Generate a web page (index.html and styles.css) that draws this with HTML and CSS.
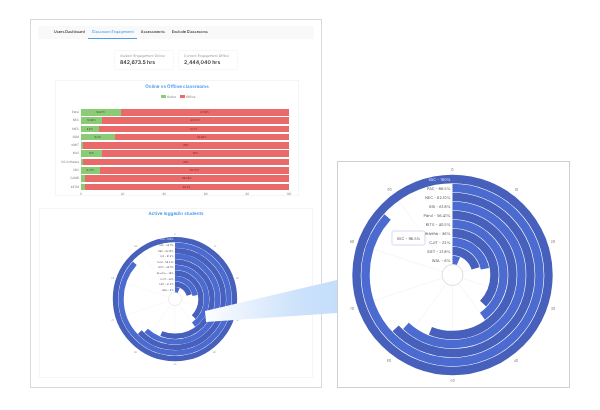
FILE: index.html
```html
<!DOCTYPE html>
<html lang="en">
<head>
    <meta charset="UTF-8">
    <title>Classroom Engagement</title>
    <link rel="stylesheet" href="styles.css">
</head>
<body>
    <div class="frame">
        <div class="tabs">
            <span class="tab">Users Dashboard</span>
            <span class="tab active">Classroom Engagement</span>
            <span class="tab">Assessments</span>
            <span class="tab">Exclude Classrooms</span>
        </div>

        <div class="stats">
            <div class="stat">
                <div class="stat-label">Student Engagement Online</div>
                <div class="stat-value">842,673.5 hrs</div>
            </div>
            <div class="stat">
                <div class="stat-label">Content Engagement Offline</div>
                <div class="stat-value">2,444,040 hrs</div>
            </div>
        </div>

        <div class="card bars-card">
            <div class="card-title">Online vs Offline classrooms</div>
            <div class="legend">
                <span class="swatch green"></span><span>Online</span>
                <span class="swatch red"></span><span>Offline</span>
            </div>
            <div class="rows">
                <div class="row"><span class="row-label">Parul</span><div class="track"><div class="seg green" style="width:19%">18.84%</div><div class="seg red">81.16%</div></div></div>
                <div class="row"><span class="row-label">NEC</span><div class="track"><div class="seg green" style="width:10%">10.06%</div><div class="seg red">89.94%</div></div></div>
                <div class="row"><span class="row-label">MEC</span><div class="track"><div class="seg green" style="width:8.6%">8.6%</div><div class="seg red">91.4%</div></div></div>
                <div class="row"><span class="row-label">SRM</span><div class="track"><div class="seg green" style="width:16.3%">16.3%</div><div class="seg red">83.68%</div></div></div>
                <div class="row"><span class="row-label">KMIT</span><div class="track"><div class="seg green" style="width:1%"></div><div class="seg red">99%</div></div></div>
                <div class="row"><span class="row-label">MVJ</span><div class="track"><div class="seg green" style="width:10.2%">10%</div><div class="seg red">90%</div></div></div>
                <div class="row"><span class="row-label">CR Software</span><div class="track"><div class="seg green" style="width:1%"></div><div class="seg red">99%</div></div></div>
                <div class="row"><span class="row-label">SRU</span><div class="track"><div class="seg green" style="width:9.2%">9.25%</div><div class="seg red">90.75%</div></div></div>
                <div class="row"><span class="row-label">CJMB</span><div class="track"><div class="seg green" style="width:2%"></div><div class="seg red">98.06%</div></div></div>
                <div class="row"><span class="row-label">KIITM</span><div class="track"><div class="seg green" style="width:1.8%"></div><div class="seg red">98.2%</div></div></div>
            </div>
            <div class="axis">
                <span class="tick">0</span><span class="tick">20</span><span class="tick">40</span><span class="tick">60</span><span class="tick">80</span><span class="tick">100</span>
            </div>
        </div>

        <div class="card radial-card">
            <div class="card-title">Active loggedin students</div>
            <svg class="radial small" viewBox="-114.5 -113 231 225">
                <g class="spokes">
                    <line y1="-10" y2="-100"/><line y1="-10" y2="-100" transform="rotate(36)"/><line y1="-10" y2="-100" transform="rotate(72)"/><line y1="-10" y2="-100" transform="rotate(108)"/><line y1="-10" y2="-100" transform="rotate(144)"/><line y1="-10" y2="-100" transform="rotate(180)"/><line y1="-10" y2="-100" transform="rotate(216)"/><line y1="-10" y2="-100" transform="rotate(252)"/><line y1="-10" y2="-100" transform="rotate(288)"/><line y1="-10" y2="-100" transform="rotate(324)"/>
                </g>
                <g class="rings" transform="rotate(-90)">
                    <circle class="dark" r="96" pathLength="100" stroke-dasharray="100 100"/>
                    <circle class="light" r="87" pathLength="100" stroke-dasharray="86.6 100"/>
                    <circle class="dark" r="78" pathLength="100" stroke-dasharray="63 100"/>
                    <circle class="light" r="69" pathLength="100" stroke-dasharray="61.8 100"/>
                    <circle class="dark" r="60" pathLength="100" stroke-dasharray="56 100"/>
                    <circle class="light" r="51" pathLength="100" stroke-dasharray="40 100"/>
                    <circle class="dark" r="42" pathLength="100" stroke-dasharray="37 100"/>
                    <circle class="light" r="33" pathLength="100" stroke-dasharray="22 100"/>
                    <circle class="dark" r="24" pathLength="100" stroke-dasharray="20.5 100"/>
                    <circle class="light" r="15" pathLength="100" stroke-dasharray="6.5 100"/>
                </g>
                <circle class="hole" r="10.5"/>
                <g class="ring-labels">
                    <text class="first" x="-2" y="-94.5">SSC - 100%</text>
                    <text x="-2" y="-85.5">PAC - 86.5%</text>
                    <text x="-2" y="-76.5">NEC - 62.10%</text>
                    <text x="-2" y="-67.5">GIS - 61.8%</text>
                    <text x="-2" y="-58.5">Parul - 56.41%</text>
                    <text x="-2" y="-49.5">KITS - 40.5%</text>
                    <text x="-2" y="-40.5">Bhartha - 36%</text>
                    <text x="-2" y="-31.5">CJIT - 22%</text>
                    <text x="-2" y="-22.5">SIET - 21.8%</text>
                    <text x="-2" y="-13.5">WAL - 6%</text>
                </g>
                <g class="angle-labels">
                    <text y="-104">0</text><text x="64" y="-84">10</text><text x="100.5" y="-32">20</text><text x="100.5" y="35">30</text><text x="63.5" y="87">40</text><text y="107">50</text><text x="-63.5" y="87">60</text><text x="-100.5" y="35">70</text><text x="-100.5" y="-32">80</text><text x="-63" y="-84">90</text>
                </g>
            </svg>
        </div>
    </div>

    <!-- band between the small chart and its enlarged copy -->
    <svg class="lens" viewBox="205 279 132 44">
        <defs>
            <linearGradient id="lensFill" x1="0" x2="1" y1="0" y2="0">
                <stop offset="0" stop-color="#fdfeff"/>
                <stop offset="0.3" stop-color="#e8f1fd"/>
                <stop offset="0.7" stop-color="#cde2fb"/>
                <stop offset="1" stop-color="#c4defb"/>
            </linearGradient>
        </defs>
        <polygon points="205,311 337,280 337,313 206,322" fill="url(#lensFill)"/>
    </svg>

    <div class="zoom-panel">
        <svg class="radial large" viewBox="-114.5 -113 231 225">
            <g class="spokes">
                <line y1="-10" y2="-100"/><line y1="-10" y2="-100" transform="rotate(36)"/><line y1="-10" y2="-100" transform="rotate(72)"/><line y1="-10" y2="-100" transform="rotate(108)"/><line y1="-10" y2="-100" transform="rotate(144)"/><line y1="-10" y2="-100" transform="rotate(180)"/><line y1="-10" y2="-100" transform="rotate(216)"/><line y1="-10" y2="-100" transform="rotate(252)"/><line y1="-10" y2="-100" transform="rotate(288)"/><line y1="-10" y2="-100" transform="rotate(324)"/>
            </g>
            <g class="rings" transform="rotate(-90)">
                <circle class="dark" r="96" pathLength="100" stroke-dasharray="100 100"/>
                <circle class="light" r="87" pathLength="100" stroke-dasharray="86.6 100"/>
                <circle class="dark" r="78" pathLength="100" stroke-dasharray="63 100"/>
                <circle class="light" r="69" pathLength="100" stroke-dasharray="61.8 100"/>
                <circle class="dark" r="60" pathLength="100" stroke-dasharray="56 100"/>
                <circle class="light" r="51" pathLength="100" stroke-dasharray="40 100"/>
                <circle class="dark" r="42" pathLength="100" stroke-dasharray="37 100"/>
                <circle class="light" r="33" pathLength="100" stroke-dasharray="22 100"/>
                <circle class="dark" r="24" pathLength="100" stroke-dasharray="20.5 100"/>
                <circle class="light" r="15" pathLength="100" stroke-dasharray="6.5 100"/>
            </g>
            <circle class="hole" r="10.5"/>
            <g class="ring-labels">
                <text class="first" x="-2" y="-94.5">SSC - 100%</text>
                <text x="-2" y="-85.5">PAC - 86.5%</text>
                <text x="-2" y="-76.5">NEC - 62.10%</text>
                <text x="-2" y="-67.5">GIS - 61.8%</text>
                <text x="-2" y="-58.5">Parul - 56.41%</text>
                <text x="-2" y="-49.5">KITS - 40.5%</text>
                <text x="-2" y="-40.5">Bhartha - 36%</text>
                <text x="-2" y="-31.5">CJIT - 22%</text>
                <text x="-2" y="-22.5">SIET - 21.8%</text>
                <text x="-2" y="-13.5">WAL - 6%</text>
            </g>
            <g class="angle-labels">
                <text y="-104">0</text><text x="64" y="-84">10</text><text x="100.5" y="-32">20</text><text x="100.5" y="35">30</text><text x="63.5" y="87">40</text><text y="107">50</text><text x="-63.5" y="87">60</text><text x="-100.5" y="35">70</text><text x="-100.5" y="-32">80</text><text x="-63" y="-84">90</text>
            </g>
            <g class="tip">
                <rect x="-60.5" y="-44" width="33" height="14" rx="1.5"/>
                <text x="-44" y="-35.4">SSC - 96.5%</text>
            </g>
        </svg>
    </div>
</body>
</html>
```

FILE: styles.css
```css
body {
    margin: 0;
    width: 600px;
    height: 410px;
    overflow: hidden;
    background-color: #ffffff;
    font-family: Inter, "Liberation Sans", sans-serif;
    color: #333333;
    text-rendering: geometricPrecision; /* keeps the tiny text at its true width */
}

/* dashboard screenshot on the left */
.frame {
    box-sizing: border-box;
    width: 292px;
    height: 369px;
    margin: 19px 0 0 30px;
    padding: 6px 7px 0;
    border: 1px solid #d9d9d9;
    filter: blur(0.35px);
}

.tabs {
    display: flex;
    height: 13px;
    padding-left: 12.5px;
    background-color: #f9f9f9;
    font-size: 3.7px;
    font-weight: 600;
    color: #444444;
}
.tab {
    padding: 0 3.5px;
    line-height: 12px;
    white-space: nowrap;
}
.tab.active {
    color: #4a9df0;
    font-weight: 500;
    border-bottom: 1px solid #4a9df0;
}

.stats {
    display: flex;
    justify-content: center;
    gap: 4px;
    margin-top: 11px;
}
.stat {
    box-sizing: border-box;
    width: 60px;
    height: 20px;
    padding: 3px 5px;
    border: 1px solid #f7f7f7;
}
.stat-label {
    font-size: 3.4px;
    line-height: 5px;
    color: #999999;
    white-space: nowrap;
}
.stat-value {
    margin-top: 1px;
    font-size: 5.2px;
    line-height: 7px;
    font-weight: 600;
    color: #333333;
    white-space: nowrap;
}

.card {
    box-sizing: border-box;
    border: 1px solid #f5f5f5;
}
.card-title {
    text-align: center;
    font-size: 4.6px;
    line-height: 6px;
    font-weight: 600;
    color: #4a9df0;
}

/* bar chart */
.bars-card {
    height: 116px;
    margin: 10px 15px 0 17px;
    padding-top: 4px;
}
.legend {
    display: flex;
    justify-content: center;
    align-items: center;
    gap: 1.5px;
    height: 5.5px;
    margin-top: 3px;
    font-size: 3px;
    color: #777777;
}
.swatch {
    width: 5px;
    height: 3px;
    margin-left: 2px;
}
.green {
    background-color: #8ccb76;
}
.red {
    background-color: #ea6969;
}
.rows {
    display: flex;
    flex-direction: column;
    gap: 1.8px;
    margin: 9.5px 9px 0 0;
    background: linear-gradient(#dddddd, #dddddd) no-repeat 24.5px 0 / 0.5px 100%;
}
.row {
    display: flex;
    height: 6.5px;
}
.row-label {
    width: 23px;
    margin-right: 2px;
    text-align: right;
    font-size: 3px;
    line-height: 6.5px;
    color: #777777;
    white-space: nowrap;
}
.track {
    flex: 1;
    display: flex;
}
.seg {
    text-align: center;
    font-size: 2.6px;
    line-height: 6.5px;
    color: #3d4a33;
    white-space: nowrap;
    overflow: hidden;
}
.seg.red {
    flex: 1;
    color: #6b2f2f;
}
.axis {
    display: flex;
    justify-content: space-between;
    margin: 1.6px 9px 0 25px;
    font-size: 3px;
    line-height: 4px;
    color: #777777;
}
.tick {
    width: 0;
    display: flex;
    justify-content: center;
}

/* radial chart */
.radial-card {
    height: 170px;
    margin: 12px 1px 0;
    padding-top: 3px;
}
.radial {
    display: block;
}
.radial.small {
    width: 143.2px;
    height: 139.5px;
    margin: 11px auto 0;
}
.radial.large {
    width: 231px;
    height: 225px;
}
.spokes line {
    stroke: #eeeeee;
    stroke-width: 0.5;
}
.rings circle {
    fill: none;
    stroke-width: 8.4;
}
.radial.small .rings circle {
    stroke-width: 8.6;
}
.rings .dark {
    stroke: #4660bc;
}
.rings .light {
    stroke: #4c6bd0;
}
.hole {
    fill: #ffffff;
    stroke: #c8c8c8;
    stroke-width: 0.6;
}
.ring-labels text {
    text-anchor: end;
    font-size: 3.9px;
    fill: #555555;
}
.ring-labels .first {
    fill: #e8ecf8;
}
.angle-labels text {
    text-anchor: middle;
    font-size: 3.6px;
    fill: #888888;
}
.tip rect {
    fill: #ffffff;
    stroke: #b4c3e6;
    stroke-width: 0.6;
}
.tip text {
    text-anchor: middle;
    font-size: 3.9px;
    fill: #555555;
}

/* overlays: the band and the enlarged chart sit over the dashboard */
.lens {
    position: absolute;
    left: 205px;
    top: 279px;
    width: 132px;
    height: 44px;
}
.zoom-panel {
    position: absolute;
    left: 337px;
    top: 161px;
    box-sizing: border-box;
    width: 233px;
    height: 227px;
    border: 1px solid #cfcfcf;
    background-color: #ffffff;
    filter: blur(0.35px);
}
```
